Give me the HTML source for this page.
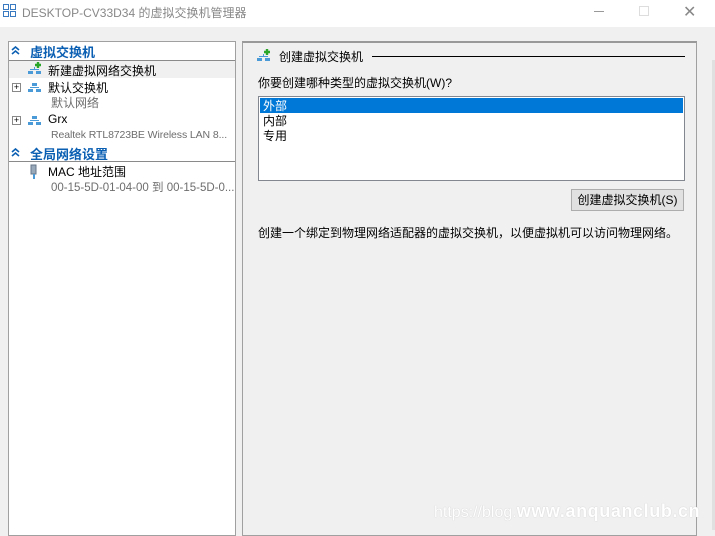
<!DOCTYPE html>
<html><head><meta charset="utf-8"><style>
*{margin:0;padding:0;box-sizing:border-box}
body{width:715px;height:530px;overflow:hidden;background:#f0f0f0;font-family:"Liberation Sans","Noto Sans CJK SC",sans-serif;font-size:12px;color:#000;position:relative}
.a{position:absolute;white-space:nowrap}
.g{color:#6d6d6d}
.b{color:#0b5fb3;font-weight:bold;font-size:13px}
</style></head><body>
<div class="a" style="left:0;top:0;width:715px;height:27px;background:#fff"></div>
<svg class="a" style="left:3px;top:4px" width="14" height="14"><rect x="0.5" y="0.5" width="5" height="5" fill="none" stroke="#3a7ac0"/><rect x="7.5" y="0.5" width="5" height="5" fill="none" stroke="#3a7ac0"/><rect x="0.5" y="7.5" width="5" height="5" fill="none" stroke="#3a7ac0"/><rect x="7.5" y="7.5" width="5" height="5" fill="none" stroke="#3a7ac0"/></svg>
<div class="a" style="left:22px;top:4px;font-size:12px;color:#888">DESKTOP-CV33D34 的虚拟交换机管理器</div>
<div class="a" style="left:594px;top:11px;width:10px;height:1px;background:#999"></div>
<div class="a" style="left:639px;top:6px;width:10px;height:10px;border:1px solid #ddd"></div>
<div class="a" style="left:683px;top:2px;color:#888;font-size:16px">✕</div>

<div class="a" style="left:8px;top:41px;width:228px;height:495px;background:#fff;border:1px solid #a0a0a0"></div>
<svg class="a" style="left:11px;top:46px" width="9" height="9"><path d="M1 4l3.5-3 3.5 3M1 8l3.5-3 3.5 3" fill="none" stroke="#0b5fb3" stroke-width="1.6"/></svg>
<div class="a b" style="left:30px;top:42px">虚拟交换机</div>
<div class="a" style="left:9px;top:60px;width:226px;height:1px;background:#8a8a8a"></div>
<div class="a" style="left:9px;top:61px;width:226px;height:17px;background:#f0f0f0"></div>
<svg class="a" style="left:27px;top:62px" width="16" height="14"><rect x="1" y="9" width="5" height="3" fill="#4a9ad8"/><rect x="9" y="9" width="5" height="3" fill="#4a9ad8"/><rect x="3" y="7" width="9" height="1" fill="#4a9ad8"/><rect x="7" y="5" width="1" height="3" fill="#4a9ad8"/><path d="M8 3h6M11 0v6" stroke="#2aa52a" stroke-width="2.4"/></svg>
<div class="a" style="left:48px;top:62px">新建虚拟网络交换机</div>
<div class="a" style="left:12px;top:83px;width:9px;height:9px;border:1px solid #888;font-size:9px;line-height:7px;text-align:center">+</div>
<svg class="a" style="left:27px;top:80px" width="16" height="14"><rect x="1" y="9" width="5" height="3" fill="#4a9ad8"/><rect x="9" y="9" width="5" height="3" fill="#4a9ad8"/><rect x="3" y="7" width="9" height="1" fill="#4a9ad8"/><rect x="5" y="3" width="5" height="3" fill="#4a9ad8"/></svg>
<div class="a" style="left:48px;top:79px">默认交换机</div>
<div class="a g" style="left:51px;top:94px">默认网络</div>
<div class="a" style="left:12px;top:116px;width:9px;height:9px;border:1px solid #888;font-size:9px;line-height:7px;text-align:center">+</div>
<svg class="a" style="left:27px;top:113px" width="16" height="14"><rect x="1" y="9" width="5" height="3" fill="#4a9ad8"/><rect x="9" y="9" width="5" height="3" fill="#4a9ad8"/><rect x="3" y="7" width="9" height="1" fill="#4a9ad8"/><rect x="5" y="3" width="5" height="3" fill="#4a9ad8"/></svg>
<div class="a" style="left:48px;top:112px">Grx</div>
<div class="a g" style="left:51px;top:129px;font-size:10.5px;letter-spacing:-0.1px">Realtek RTL8723BE Wireless LAN 8...</div>
<svg class="a" style="left:11px;top:148px" width="9" height="9"><path d="M1 4l3.5-3 3.5 3M1 8l3.5-3 3.5 3" fill="none" stroke="#0b5fb3" stroke-width="1.6"/></svg>
<div class="a b" style="left:30px;top:144px">全局网络设置</div>
<div class="a" style="left:9px;top:161px;width:226px;height:1px;background:#8a8a8a"></div>
<svg class="a" style="left:30px;top:164px" width="8" height="16"><rect x="1" y="1" width="5" height="9" fill="#9ab" stroke="#678"/><rect x="3" y="10" width="2" height="5" fill="#4a9ad8"/></svg>
<div class="a" style="left:48px;top:163px">MAC 地址范围</div>
<div class="a g" style="left:51px;top:179px;font-size:11.5px">00-15-5D-01-04-00 到 00-15-5D-0...</div>

<div class="a" style="left:242px;top:41px;width:455px;height:495px;border:1px solid #a0a0a0;border-top:2px solid #999"></div>
<svg class="a" style="left:256px;top:49px" width="16" height="14"><rect x="1" y="9" width="5" height="3" fill="#4a9ad8"/><rect x="9" y="9" width="5" height="3" fill="#4a9ad8"/><rect x="3" y="7" width="9" height="1" fill="#4a9ad8"/><rect x="7" y="5" width="1" height="3" fill="#4a9ad8"/><path d="M8 3h6M11 0v6" stroke="#2aa52a" stroke-width="2.4"/></svg>
<div class="a" style="left:279px;top:48px">创建虚拟交换机</div>
<div class="a" style="left:372px;top:56px;width:313px;height:1px;background:#000"></div>
<div class="a" style="left:258px;top:74px">你要创建哪种类型的虚拟交换机(W)?</div>
<div class="a" style="left:258px;top:96px;width:427px;height:85px;background:#fff;border:1px solid #828790"></div>
<div class="a" style="left:260px;top:98px;width:423px;height:15px;background:#0078d7"></div>
<div class="a" style="left:263px;top:97px;color:#fff">外部</div>
<div class="a" style="left:263px;top:112px">内部</div>
<div class="a" style="left:263px;top:127px">专用</div>
<div class="a" style="left:571px;top:189px;width:113px;height:22px;background:#e1e1e1;border:1px solid #adadad;text-align:center;line-height:20px">创建虚拟交换机(S)</div>
<div class="a" style="left:258px;top:224px">创建一个绑定到物理网络适配器的虚拟交换机，以便虚拟机可以访问物理网络。</div>
<div class="a" style="left:712px;top:60px;width:3px;height:470px;background:#e0e0e0"></div>
<div class="a" style="left:434px;top:501px;color:#fff;font-size:16px;text-shadow:0 0 1px #bbb">https://blog.<b style="font-size:18px;letter-spacing:0.6px">www.anquanclub.cn</b></div>
</body></html>
